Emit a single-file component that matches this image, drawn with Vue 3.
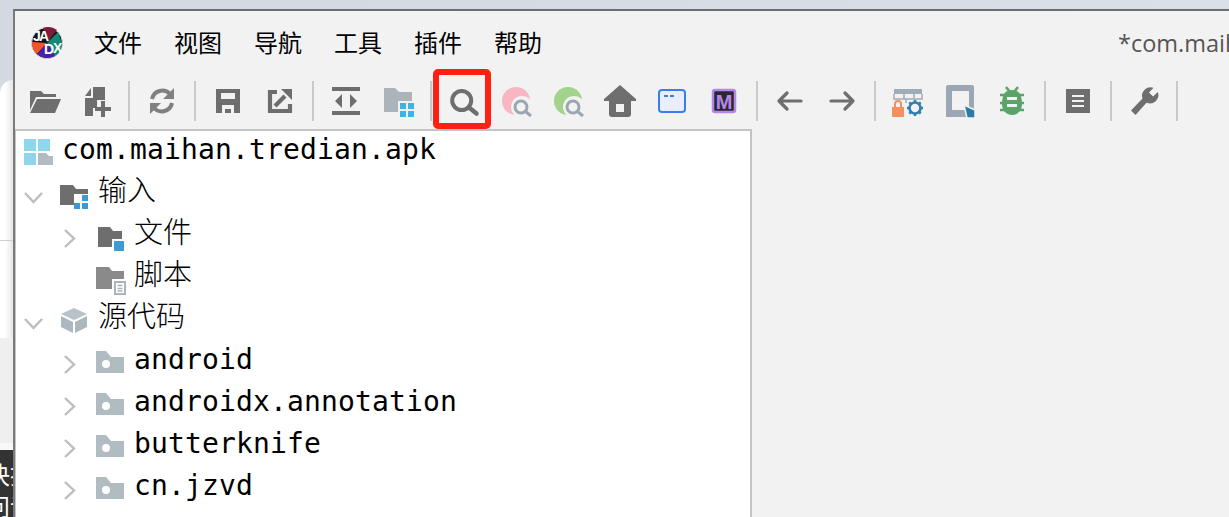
<script setup>
const menus = ['文件', '视图', '导航', '工具', '插件', '帮助']
const packages = ['android', 'androidx.annotation', 'butterknife', 'cn.jzvd']
</script>

<template>
  <div class="root">
    <aside class="strip">
      <div class="strip-a"></div>
      <div class="strip-b"></div>
      <div class="strip-c"></div>
      <div class="strip-d">
        <span>决拒</span>
        <span>问词</span>
      </div>
    </aside>

    <main class="window">
      <header class="menubar">
        <svg class="logo" viewBox="0 0 32 32" width="32" height="32">
          <circle cx="16" cy="16" r="15.5" fill="#111" stroke="#ddd" stroke-width="1" />
          <path d="M16 16L26 3A15 15 0 0 0 12 1Z" fill="#7d1c3c" />
          <path d="M16 16L1 15A15 15 0 0 0 6 27Z" fill="#f0562a" />
          <path d="M16 16L6 27A15 15 0 0 0 24 29Z" fill="#4a1fa8" />
          <path d="M16 16L24 29A15 15 0 0 0 31 16L27 5Z" fill="#0f8a76" />
          <text x="2" y="14" class="logo-t" fill="#fff">J</text>
          <text x="8" y="14" class="logo-t" fill="#fff">A</text>
          <text x="13" y="27" class="logo-t" fill="#fff">D</text>
          <text x="22" y="26" class="logo-t" fill="#fff">X</text>
        </svg>
        <span v-for="m in menus" :key="m" class="menu">{{ m }}</span>
        <span class="title">*com.maihan.tredian.apk</span>
      </header>

      <nav class="toolbar">
        <span class="btn">
          <svg viewBox="0 0 32 32" width="32" height="32"><path fill="#6e6e6e" d="M2 6H13L16 9H28V12H8L2 25ZM9 14H33L27 28H2Z" /></svg>
        </span>
        <span class="btn">
          <svg viewBox="0 0 32 32" width="32" height="32"><path fill="#6e6e6e" d="M13 2H25V15H17V23H13V31H5V13H13ZM5 11L11 3V11Z" /><path stroke="#6e6e6e" stroke-width="4" d="M15 24H31M23 16V32" /></svg>
        </span>
        <i class="sep"></i>
        <span class="btn">
          <svg viewBox="0 0 32 32" width="32" height="32" fill="none" stroke="#808080" stroke-width="4"><path d="M6 14A10.5 10.5 0 0 1 24 9" /><path d="M26 18A10.5 10.5 0 0 1 8 23" /><path fill="#808080" stroke="none" d="M28 3V14H17ZM4 29V18H15Z" /></svg>
        </span>
        <i class="sep"></i>
        <span class="btn">
          <svg viewBox="0 0 32 32" width="32" height="32"><path fill="#6e6e6e" fill-rule="evenodd" d="M4 4H28V28H4ZM9 8V14H23V8ZM10 20V28H13V24H19V28H22V20Z" /></svg>
        </span>
        <span class="btn">
          <svg viewBox="0 0 32 32" width="32" height="32"><path fill="none" stroke="#6e6e6e" stroke-width="4.2" d="M13 7H6V26H26V19" /><path stroke="#6e6e6e" stroke-width="4.2" d="M11 21L21 11" /><path fill="#6e6e6e" d="M17 4H28V15Z" /></svg>
        </span>
        <i class="sep"></i>
        <span class="btn">
          <svg viewBox="0 0 32 32" width="32" height="32"><path fill="#6e6e6e" d="M2 2H30V6H2ZM2 26H30V30H2ZM12 9V23L5 16ZM20 9V23L27 16Z" /></svg>
        </span>
        <span class="btn">
          <svg viewBox="0 0 32 32" width="32" height="32"><path fill="#aab4ba" d="M2 3H13L17 7H30V16H16V27H2Z" /><path fill="#3cb4e6" d="M18 18H24V24H18ZM26 18H32V24H26ZM18 26H24V32H18ZM26 26H32V32H26Z" /></svg>
        </span>
        <i class="sep"></i>
        <span class="btn marked">
          <svg viewBox="0 0 32 32" width="32" height="32" fill="none" stroke="#6e6e6e" stroke-width="4"><circle cx="13.7" cy="15.5" r="9.5" /><path stroke-width="4.5" stroke-linecap="round" d="M21 22.5L28.5 28.5" /></svg>
          <b class="mark"></b>
        </span>
        <span class="btn">
          <svg viewBox="0 0 32 32" width="32" height="32" fill="none"><circle cx="16" cy="16" r="14" fill="#f7b6c2" /><circle cx="22" cy="22" r="11" fill="#f2f2f2" /><circle cx="21" cy="22" r="6" stroke="#9aa7b0" stroke-width="3" /><path stroke="#9aa7b0" stroke-width="3" d="M25.5 26.5L31 31" /></svg>
        </span>
        <span class="btn">
          <svg viewBox="0 0 32 32" width="32" height="32" fill="none"><circle cx="16" cy="16" r="14" fill="#a3d28c" /><circle cx="22" cy="22" r="11" fill="#f2f2f2" /><circle cx="21" cy="22" r="6" stroke="#9aa7b0" stroke-width="3" /><path stroke="#9aa7b0" stroke-width="3" d="M25.5 26.5L31 31" /></svg>
        </span>
        <span class="btn">
          <svg viewBox="0 0 32 32" width="32" height="32"><path fill="#6e6e6e" fill-rule="evenodd" d="M16 0L32 14V16H27V29A3 3 0 0 1 24 32H8A3 3 0 0 1 5 29V16H0V14ZM12 19V27H20V19Z" /></svg>
        </span>
        <span class="btn">
          <svg viewBox="0 0 32 32" width="32" height="32"><rect x="3" y="5" width="26" height="22" rx="3" fill="#e8eefb" stroke="#3b7df0" stroke-width="2" /><path fill="#3b7df0" d="M8 10H12V12H8ZM14 10H18V12H14Z" /></svg>
        </span>
        <span class="btn">
          <svg viewBox="0 0 32 32" width="32" height="32"><rect x="5" y="5" width="22" height="22" rx="2" fill="#2b2735" stroke="#b388e8" stroke-width="2.5" /><text x="16" y="23.5" text-anchor="middle" class="m-t">M</text></svg>
        </span>
        <i class="sep"></i>
        <span class="btn">
          <svg viewBox="0 0 32 32" width="32" height="32" fill="none" stroke="#6e6e6e" stroke-width="3.2" stroke-linecap="round" stroke-linejoin="round"><path d="M5 16H27M13 8L5 16L13 24" /></svg>
        </span>
        <span class="btn">
          <svg viewBox="0 0 32 32" width="32" height="32" fill="none" stroke="#6e6e6e" stroke-width="3.2" stroke-linecap="round" stroke-linejoin="round"><path d="M5 16H27M19 8L27 16L19 24" /></svg>
        </span>
        <i class="sep"></i>
        <span class="btn">
          <svg viewBox="0 0 32 32" width="32" height="32"><path fill="#a0acb5" d="M2 4H30V9H2Z" /><path stroke="#a0acb5" stroke-width="1.5" fill="none" d="M2 9V14H30V9M12 9V14M22 9V14M14 14V18" /><rect x="0" y="22" width="12" height="10" fill="#f2915f" /><path d="M3 22V19A3 3 0 0 1 9 19V22" fill="none" stroke="#f2915f" stroke-width="2" /><g fill="none" stroke="#2f7fb0"><circle cx="23" cy="23" r="5.5" stroke-width="2.6" /><path stroke-width="2.4" d="M23 15V18M23 28V31M15 23H18M28 23H31M17.3 17.3L19.4 19.4M26.6 26.6L28.7 28.7M28.7 17.3L26.6 19.4M19.4 26.6L17.3 28.7" /></g></svg>
        </span>
        <span class="btn">
          <svg viewBox="0 0 32 32" width="32" height="32"><path fill="#9ba8b3" fill-rule="evenodd" d="M4 0H28A2 2 0 0 1 30 2V32H2V2A2 2 0 0 1 4 0ZM8 6V25H25V6Z" /><path fill="#2a7ba8" stroke="#f2f2f2" stroke-width="1.5" d="M20 20L31 25V33H23Z" /></svg>
        </span>
        <span class="btn">
          <svg viewBox="0 0 32 32" width="32" height="32"><path stroke="#5aa469" stroke-width="2.6" d="M10 2L14 7M22 2L18 7M4 10H28M4 18H28M4 25H28" /><path fill="#5aa469" d="M16 5C20 5 23 7 24 9C25 11 26 14 26 19C26 26 21 30 16 30C11 30 6 26 6 19C6 14 7 11 8 9C9 7 12 5 16 5Z" /><path fill="#f2f2f2" d="M11 12H21V15H11ZM11 19H21V22H11Z" /></svg>
        </span>
        <i class="sep"></i>
        <span class="btn">
          <svg viewBox="0 0 32 32" width="32" height="32"><rect x="4" y="4" width="24" height="24" fill="#6e6e6e" /><path fill="#f2f2f2" d="M10 10H22V12H10ZM10 15H22V17H10ZM10 20H22V22H10Z" /></svg>
        </span>
        <i class="sep"></i>
        <span class="btn">
          <svg viewBox="0 0 32 32" width="32" height="32"><path fill="#6e6e6e" d="M29.8 7L25 11.5L21 7.5L25.5 2.8A8.5 8.5 0 0 0 14.5 13.5L3 25.5L7.5 30L18.5 17.8A8.5 8.5 0 0 0 29.8 7Z" /></svg>
        </span>
        <i class="sep"></i>
      </nav>

      <section class="panel">
        <div class="tree">
          <div class="row">
            <span class="slot">
              <svg viewBox="0 0 32 32" width="32" height="32"><path fill="#8dd6ee" d="M0 6H12V18H0ZM14 6H26V18H14ZM0 20H12V32H0Z" /><path fill="#b0bbc2" d="M14 20H22L25 23H29V32H14Z" /></svg>
            </span>
            <span class="mono">com.maihan.tredian.apk</span>
          </div>

          <div class="row">
            <svg class="chev" viewBox="0 0 36 32" width="36" height="32"><path d="M9 18L17.5 27L26 18" /></svg>
            <span class="slot">
              <svg viewBox="0 0 32 32" width="32" height="32"><path fill="#6e6e6e" d="M0 10H13L16 14H28V19H14V30H0Z" /><path fill="#3a9bd5" d="M22 20H28V26H22ZM14 28H20V34H14ZM22 28H28V34H22Z" /></svg>
            </span>
            <span class="cjk">输入</span>
          </div>

          <div class="row lv2">
            <svg class="chev" viewBox="0 0 36 32" width="36" height="32"><path d="M13 13L22 21.5L13 30" /></svg>
            <span class="slot">
              <svg viewBox="0 0 32 32" width="32" height="32"><path fill="#6e6e6e" d="M2 10H14L17 14H26V22H16V30H2Z" /><path fill="#3a9bd5" d="M18 24H28V34H18Z" /></svg>
            </span>
            <span class="cjk">文件</span>
          </div>

          <div class="row lv2">
            <span class="chev-empty"></span>
            <span class="slot">
              <svg viewBox="0 0 32 32" width="32" height="32"><path fill="#8a8a8a" d="M0 8H13L16 12H28V20H16V30H0Z" /><rect x="19" y="23" width="10" height="12" fill="#fff" stroke="#a9b4bc" stroke-width="2" /><path stroke="#a9b4bc" stroke-width="1.5" d="M21.5 26.5H26.5M21.5 29.5H26.5M21.5 32H26.5" /></svg>
            </span>
            <span class="cjk">脚本</span>
          </div>

          <div class="row">
            <svg class="chev" viewBox="0 0 36 32" width="36" height="32"><path d="M9 18L17.5 27L26 18" /></svg>
            <span class="slot">
              <svg viewBox="0 0 32 32" width="32" height="32"><path fill="#b7c2c9" d="M14 7L27 13L14 19L1 13Z" /><path fill="#acb8c0" d="M1 15L13 21V32L1 26ZM15 21L27 15V26L15 32Z" /></svg>
            </span>
            <span class="cjk">源代码</span>
          </div>

          <div v-for="p in packages" :key="p" class="row lv2">
            <svg class="chev" viewBox="0 0 36 32" width="36" height="32"><path d="M13 13L22 21.5L13 30" /></svg>
            <span class="slot pkg">
              <svg viewBox="0 0 32 32" width="32" height="32"><path fill="#b0bbc2" d="M0 8H10L15 14H28V30H0Z" /><circle cx="10" cy="21" r="4" fill="#fff" /></svg>
            </span>
            <span class="mono">{{ p }}</span>
          </div>
        </div>
      </section>
    </main>
  </div>
</template>

<style scoped>
.root {
  display: flex;
  width: 1229px;
  height: 517px;
  overflow: hidden;
  background: linear-gradient(90deg, #d3d8e1, #dbdfe6);
}
.strip {
  width: 13px;
  flex-shrink: 0;
  padding-top: 80px;
  display: flex;
  flex-direction: column;
  box-sizing: border-box;
  overflow: hidden;
}
.strip-a {
  height: 161px;
  flex-shrink: 0;
  border-top-left-radius: 14px;
  border-bottom: 1px solid #cfcfcf;
  box-sizing: border-box;
  background: linear-gradient(90deg, #fff 40%, #e6e6e6);
}
.strip-b {
  height: 97px;
  flex-shrink: 0;
  background: linear-gradient(90deg, #fff 40%, #e6e6e6);
}
.strip-c {
  height: 112px;
  flex-shrink: 0;
  background: #efefef;
  border-bottom: 7px solid #f8f8f8;
  box-sizing: border-box;
}
.strip-d {
  flex: 1;
  background: #333;
  color: #fff;
  font: 24px/32px "Noto Sans CJK SC", sans-serif;
  display: flex;
  flex-direction: column;
  padding-top: 8px;
  margin-left: -14px;
  white-space: nowrap;
}
.window {
  flex: 1;
  min-width: 0;
  margin-top: 9px;
  background: #f2f2f2;
  border-top: 2px solid #6b6e72;
  border-left: 2px solid #7a7a7a;
  display: flex;
  flex-direction: column;
  overflow: hidden;
}
.menubar {
  height: 64px;
  flex-shrink: 0;
  display: flex;
  align-items: center;
  padding-left: 16px;
  white-space: nowrap;
}
.logo {
  margin-right: 15px;
  flex-shrink: 0;
}
.logo-t {
  font: 700 14px "Liberation Sans", sans-serif;
}
.m-t {
  font: 700 20px "Liberation Sans", sans-serif;
  fill: #b388e8;
}
.menu {
  padding: 0 16px 2px;
  flex-shrink: 0;
  font: 24px/34px "Noto Sans CJK SC", sans-serif;
  color: #000;
}
.title {
  margin-left: 560px;
  flex-shrink: 0;
  font: 23.5px/34px "Open Sans", sans-serif;
  color: #555;
}
.toolbar {
  height: 54px;
  flex-shrink: 0;
  box-sizing: border-box;
  padding: 0 0 2px 3px;
  display: flex;
  align-items: center;
}
.btn {
  position: relative;
  width: 52px;
  height: 52px;
  flex-shrink: 0;
  display: flex;
  align-items: center;
  justify-content: center;
}
.btn svg {
  overflow: visible;
}
.sep {
  width: 2px;
  height: 40px;
  margin: 0 6px;
  flex-shrink: 0;
  background: #c9c9c9;
}
.mark {
  position: absolute;
  left: -5px;
  top: -6px;
  width: 58px;
  height: 60px;
  box-sizing: border-box;
  border: 6px solid #ff2012;
  border-radius: 5px;
}
.panel {
  width: 737px;
  flex: 1;
  box-sizing: border-box;
  background: #fff;
  border-top: 2px solid #c4c4c4;
  border-right: 2px solid #c4c4c4;
  border-left: 1px solid #c4c4c4;
  overflow: hidden;
}
.tree {
  margin-top: -3px;
}
.row {
  height: 42px;
  display: flex;
  align-items: center;
  white-space: nowrap;
}
.lv2 {
  padding-left: 36px;
}
.chev {
  flex-shrink: 0;
  fill: none;
  stroke: #bdbdbd;
  stroke-width: 2.4;
}
.chev-empty {
  width: 36px;
  flex-shrink: 0;
}
.slot {
  width: 46px;
  flex-shrink: 0;
  display: flex;
  padding-left: 8px;
  box-sizing: border-box;
}
.slot svg {
  overflow: visible;
}
.mono {
  padding-top: 2px;
  font: 28px/42px "DejaVu Sans Mono", monospace;
  letter-spacing: 0.14px;
  color: #000;
}
.cjk {
  padding-bottom: 6px;
  font: 300 29px/42px "Noto Sans CJK SC", sans-serif;
  color: #000;
}
</style>

<style>
html, body {
  margin: 0;
  overflow: hidden;
}
</style>
